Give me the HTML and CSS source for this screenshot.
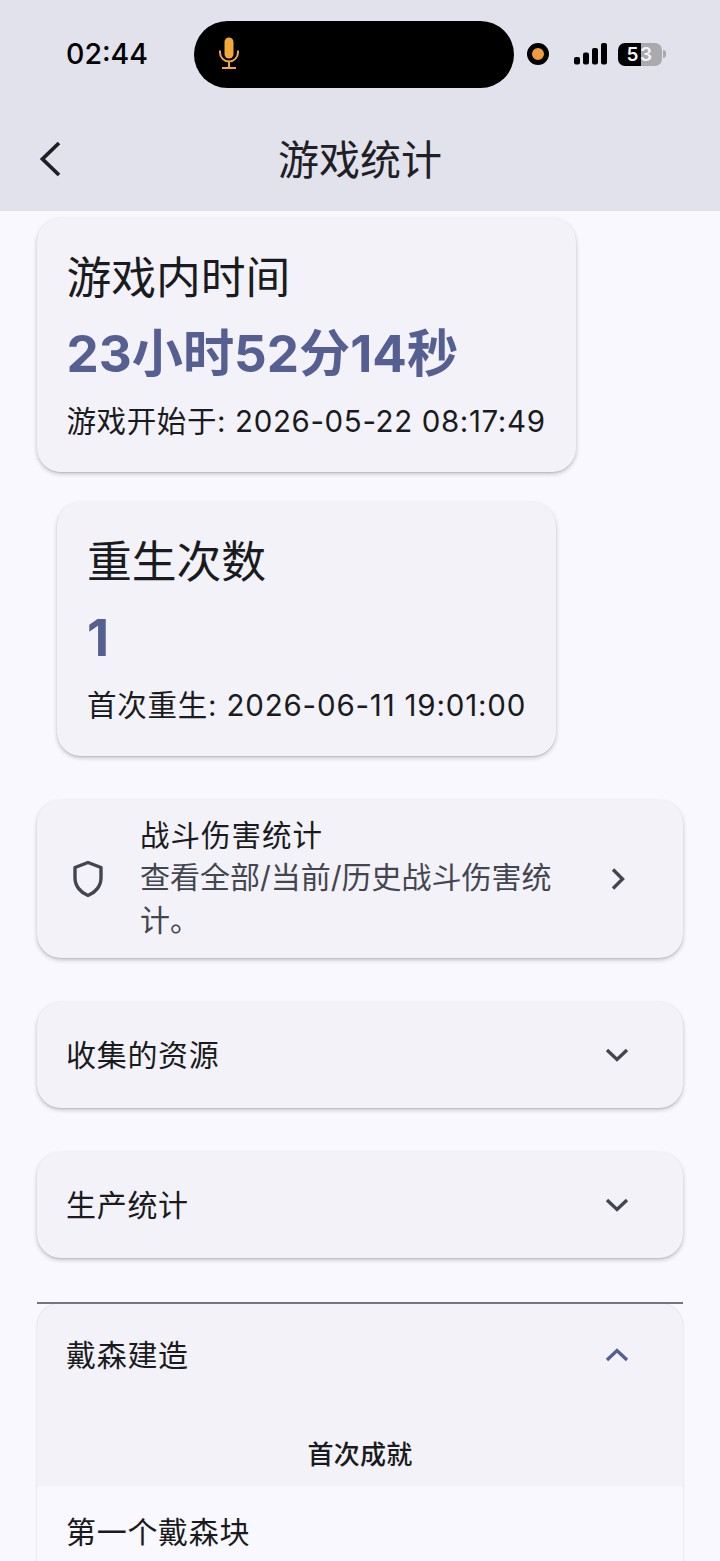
FILE: index.html
```html
<!DOCTYPE html>
<html lang="zh">
<head>
<meta charset="utf-8">
<title>游戏统计</title>
<link rel="stylesheet" href="styles.css">
</head>
<body>
<div class="screen">
  <header class="topbar">
    <div class="status">
      <span class="clock">02:44</span>
      <div class="island">
        <svg class="mic" width="24" height="34" viewBox="0 0 24 34"><rect x="7.500" y="0.500" width="9" height="21" rx="4.500" fill="#f2a93b"/><path d="M3 13.500v2a9 9 0 0 0 18 0v-2M12 24.500v6M5 31h14" fill="none" stroke="#f2a93b" stroke-width="2"/></svg>
      </div>
      <span class="rec"></span>
      <svg class="signal" width="33" height="22" viewBox="0 0 33 22"><rect x="0" y="14" width="6" height="7.500" rx="2" fill="#000"/><rect x="9" y="9.500" width="6" height="12" rx="2" fill="#000"/><rect x="18" y="5" width="6" height="16.500" rx="2" fill="#000"/><rect x="27" y="0" width="6" height="21.500" rx="2" fill="#000"/></svg>
      <div class="battery"><span class="bat-num">53</span></div>
      <span class="bat-tip"></span>
    </div>
    <div class="titlebar">
      <svg class="back" width="24" height="36" viewBox="0 0 24 36"><path d="M21 2 4.500 18 21 34" fill="none" stroke="#1f2026" stroke-width="3.800"/></svg>
      <h1 class="title">游戏统计</h1>
    </div>
  </header>

  <main class="content">
    <div class="stats">
      <section class="card stat stat-tight">
        <div class="stat-label">游戏内时间</div>
        <div class="stat-value">23小时52分14秒</div>
        <div class="stat-note">游戏开始于: 2026-05-22 08:17:49</div>
      </section>
      <section class="card stat">
        <div class="stat-label">重生次数</div>
        <div class="stat-value">1</div>
        <div class="stat-note stat-note-wide">首次重生: 2026-06-11 19:01:00</div>
      </section>
    </div>

    <section class="card link-row">
      <svg class="shield" width="32" height="38" viewBox="0 0 32 38"><path d="M16 2.500 3 7.500v10.500c0 8 5.500 14.500 13 17.500 7.500-3 13-9.500 13-17.500V7.500Z" fill="none" stroke="#44464f" stroke-width="3.400" stroke-linejoin="round"/></svg>
      <div class="link-text">
        <div class="link-title">战斗伤害统计</div>
        <div class="link-sub">查看全部/当前/历史战斗伤害统计。</div>
      </div>
      <svg class="chev-right" width="16" height="24" viewBox="0 0 16 24"><path d="M3 2.500 12.500 12 3 21.500" fill="none" stroke="#44464f" stroke-width="3.400"/></svg>
    </section>

    <section class="card fold">
      <span class="fold-title">收集的资源</span>
      <svg class="chev" width="24" height="16" viewBox="0 0 24 16"><path d="M2 3 12 12.500 22 3" fill="none" stroke="#44464f" stroke-width="3.400"/></svg>
    </section>

    <section class="card fold">
      <span class="fold-title">生产统计</span>
      <svg class="chev" width="24" height="16" viewBox="0 0 24 16"><path d="M2 3 12 12.500 22 3" fill="none" stroke="#44464f" stroke-width="3.400"/></svg>
    </section>

    <div class="open-group">
      <div class="divider"></div>
      <section class="card open">
        <div class="fold open-head">
          <span class="fold-title">戴森建造</span>
          <svg class="chev" width="24" height="16" viewBox="0 0 24 16"><path d="M2 13 12 3.500 22 13" fill="none" stroke="#555f91" stroke-width="3.400"/></svg>
        </div>
        <div class="group-head">首次成就</div>
        <div class="open-body">
          <div class="entry">第一个戴森块</div>
        </div>
      </section>
    </div>
  </main>
</div>
</body>
</html>
```

FILE: styles.css
```css
* { box-sizing: border-box; }
html, body { margin: 0; padding: 0; }
body {
  width: 720px;
  height: 1561px;
  overflow: hidden;
  background: #faf8ff;
  color: #1a1b20;
  font-family: Inter, "Noto Sans CJK SC", sans-serif;
}
.screen { display: flex; flex-direction: column; height: 1561px; overflow: hidden; }
.topbar { background: #e2e2ec; height: 211px; flex: none; }
.status { display: flex; align-items: center; height: 108px; padding-left: 66px; }
.clock { width: 128px; font-size: 28.500px; font-weight: 550; color: #000; line-height: 34px; }
.island {
  width: 320px; height: 67px; border-radius: 34px; background: #000;
  display: flex; align-items: center; padding-left: 23px;
}
.mic { display: block; }
.rec {
  width: 22px; height: 22px; margin-left: 13px; border-radius: 50%;
  background: #f19a3e; border: 5px solid #000; flex: none;
}
.signal { margin-left: 25px; flex: none; }
.battery {
  width: 44px; height: 23px; margin-left: 11px; border-radius: 7px; flex: none;
  background: linear-gradient(90deg, #000 0 52%, #a9a9ae 52% 100%);
  display: flex; align-items: center; justify-content: center;
}
.bat-num { font-size: 19px; font-weight: 600; color: #f4f4f6; letter-spacing: 1.500px; line-height: 23px; }
.bat-tip { width: 3px; height: 8px; margin-left: 1px; background: #a9a9ae; border-radius: 0 3px 3px 0; flex: none; }
.titlebar { position: relative; height: 103px; display: flex; align-items: flex-start; justify-content: center; }
.back { position: absolute; left: 38px; top: 33px; }
.title { margin: 26px 0 0; font-size: 41px; font-weight: 400; line-height: 52px; color: #1f2026; }

.content { display: flex; flex-direction: column; padding: 7px 37px 0; gap: 44px; flex: 1; }
.card {
  background: #f3f2f9;
  border-radius: 24px;
  box-shadow: 0 2px 4px rgba(0, 0, 0, .22), 0 1px 1px rgba(0, 0, 0, .08);
}
.stats { display: flex; flex-direction: column; align-items: center; gap: 30px; width: 539px; }
.stat { padding: 29px 30px 0; height: 254px; width: fit-content; white-space: nowrap; }
.stat-tight { padding-left: 29px; }
.stat-label { font-size: 44.800px; line-height: 62px; }
.stat-value { font-size: 51.200px; font-weight: 700; line-height: 68px; margin-top: 10px; color: #555f91; }
.stat-note { font-size: 29.500px; line-height: 40px; margin-top: 14px; letter-spacing: .62px; }
.stat-note-wide { letter-spacing: .8px; }

.link-row { display: flex; align-items: center; height: 158px; padding: 0 58px 0 35px; }
.shield { flex: none; }
.link-text { width: 420px; margin-left: 36px; flex: none; }
.link-title { font-size: 29.500px; line-height: 37px; letter-spacing: 1px; }
.link-sub { font-size: 30px; line-height: 43px; margin-top: 2px; color: #44464f; }
.chev-right { flex: none; margin-left: 50px; }

.fold { display: flex; align-items: center; justify-content: space-between; height: 106px; padding: 0 54px 0 29px; }
.fold-title { font-size: 30px; line-height: 40px; letter-spacing: .7px; }
.open-group { margin-top: 0; }
.divider { position: relative; z-index: 1; height: 2px; background: #75767f; }
.open { border-radius: 24px 24px 0 0; margin-top: -1px; height: 300px; overflow: hidden; box-shadow: 0 0 2px rgba(0, 0, 0, .2); }
.open-head { height: 103px; }
.group-head {
  height: 80px; padding-top: 29px; text-align: center;
  font-size: 26px; font-weight: 500; line-height: 40px; letter-spacing: 0.300px;
}
.open-body { background: #faf8ff; height: 120px; padding: 26px 29px 0; }
.entry { font-size: 30px; line-height: 40px; letter-spacing: .7px; }
```
